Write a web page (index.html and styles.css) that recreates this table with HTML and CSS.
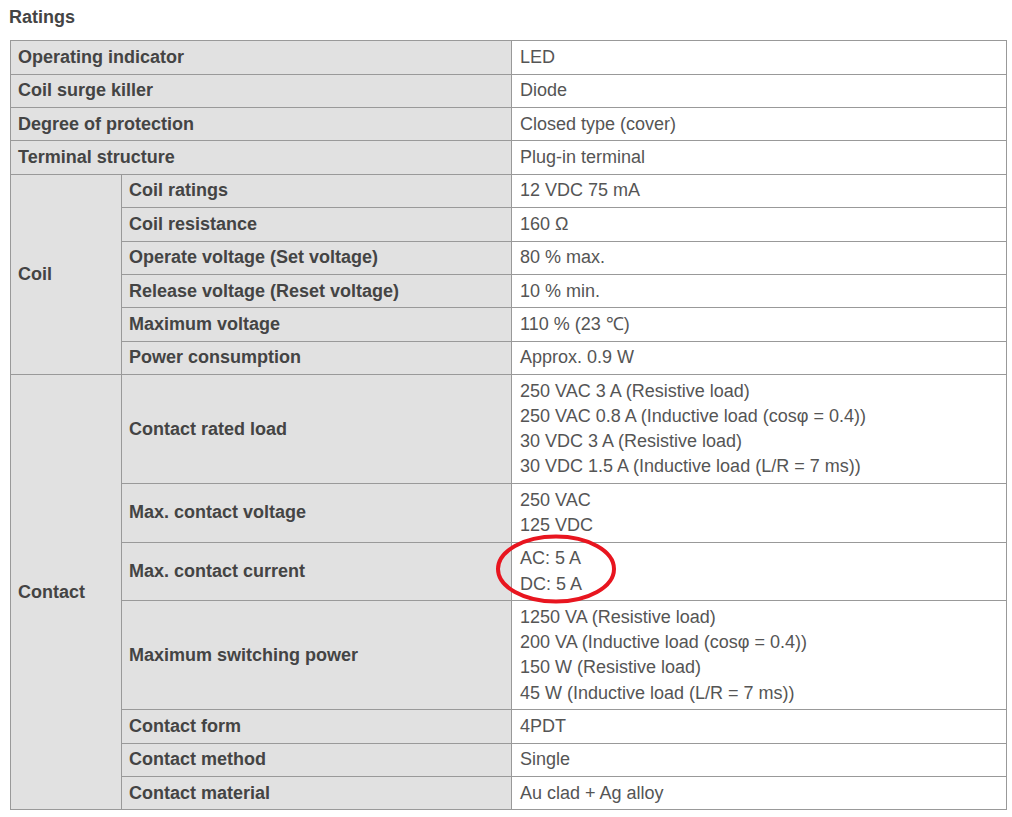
FILE: index.html
```html
<!DOCTYPE html>
<html>
<head>
<meta charset="utf-8">
<link rel="stylesheet" href="styles.css">
</head>
<body>
<div class="page">
  <h3 class="title">Ratings</h3>
  <div class="wrap">
  <table class="spec">
    <colgroup><col class="c1"><col class="c2"><col class="c3"></colgroup>
    <tr><th colspan="2">Operating indicator</th><td>LED</td></tr>
    <tr><th colspan="2">Coil surge killer</th><td>Diode</td></tr>
    <tr><th colspan="2">Degree of protection</th><td>Closed type (cover)</td></tr>
    <tr><th colspan="2">Terminal structure</th><td>Plug-in terminal</td></tr>
    <tr><th rowspan="6">Coil</th><th>Coil ratings</th><td>12 VDC 75 mA</td></tr>
    <tr><th>Coil resistance</th><td>160 Ω</td></tr>
    <tr><th>Operate voltage (Set voltage)</th><td>80 % max.</td></tr>
    <tr><th>Release voltage (Reset voltage)</th><td>10 % min.</td></tr>
    <tr><th>Maximum voltage</th><td>110 % (23 ℃)</td></tr>
    <tr><th>Power consumption</th><td>Approx. 0.9 W</td></tr>
    <tr><th rowspan="7">Contact</th><th>Contact rated load</th><td>250 VAC 3 A (Resistive load)<br>250 VAC 0.8 A (Inductive load (cosφ = 0.4))<br>30 VDC 3 A (Resistive load)<br>30 VDC 1.5 A (Inductive load (L/R = 7 ms))</td></tr>
    <tr><th>Max. contact voltage</th><td>250 VAC<br>125 VDC</td></tr>
    <tr><th>Max. contact current</th><td>AC: 5 A<br>DC: 5 A</td></tr>
    <tr><th>Maximum switching power</th><td>1250 VA (Resistive load)<br>200 VA (Inductive load (cosφ = 0.4))<br>150 W (Resistive load)<br>45 W (Inductive load (L/R = 7 ms))</td></tr>
    <tr><th>Contact form</th><td>4PDT</td></tr>
    <tr><th>Contact method</th><td>Single</td></tr>
    <tr><th>Contact material</th><td>Au clad + Ag alloy</td></tr>
  </table>
  <svg class="mark" width="124" height="74" viewBox="0 0 124 74"><ellipse cx="62" cy="37" rx="58" ry="32.5" fill="none" stroke="#e8151f" stroke-width="4"/></svg>
  </div>
</div>
</body>
</html>
```
FILE: styles.css
```css
html, body { margin: 0; padding: 0; background: #fff; }
body { font-family: "Liberation Sans", Arial, sans-serif; font-size: 18px; color: #444; }
.page { padding: 5px 7px 0 10px; }
.title { margin: 0 0 10px -1px; font-size: 18px; font-weight: bold; line-height: 25.2px; color: #444; }
.wrap { position: relative; width: 996px; }
.spec { border-collapse: collapse; table-layout: fixed; width: 996px; }
.c1 { width: 111px; }
.c2 { width: 390px; }
.c3 { width: 495px; }
.spec th, .spec td { border: 1px solid #999; padding: 3.6px 8px 3.6px 7px; line-height: 25.2px; text-align: left; vertical-align: middle; }
.spec th { background: #e1e1e1; font-weight: bold; color: #444; }
.spec td { background: #fff; font-weight: normal; color: #555; padding-left: 8px; }
.mark { position: absolute; left: 484px; top: 492px; }
```
